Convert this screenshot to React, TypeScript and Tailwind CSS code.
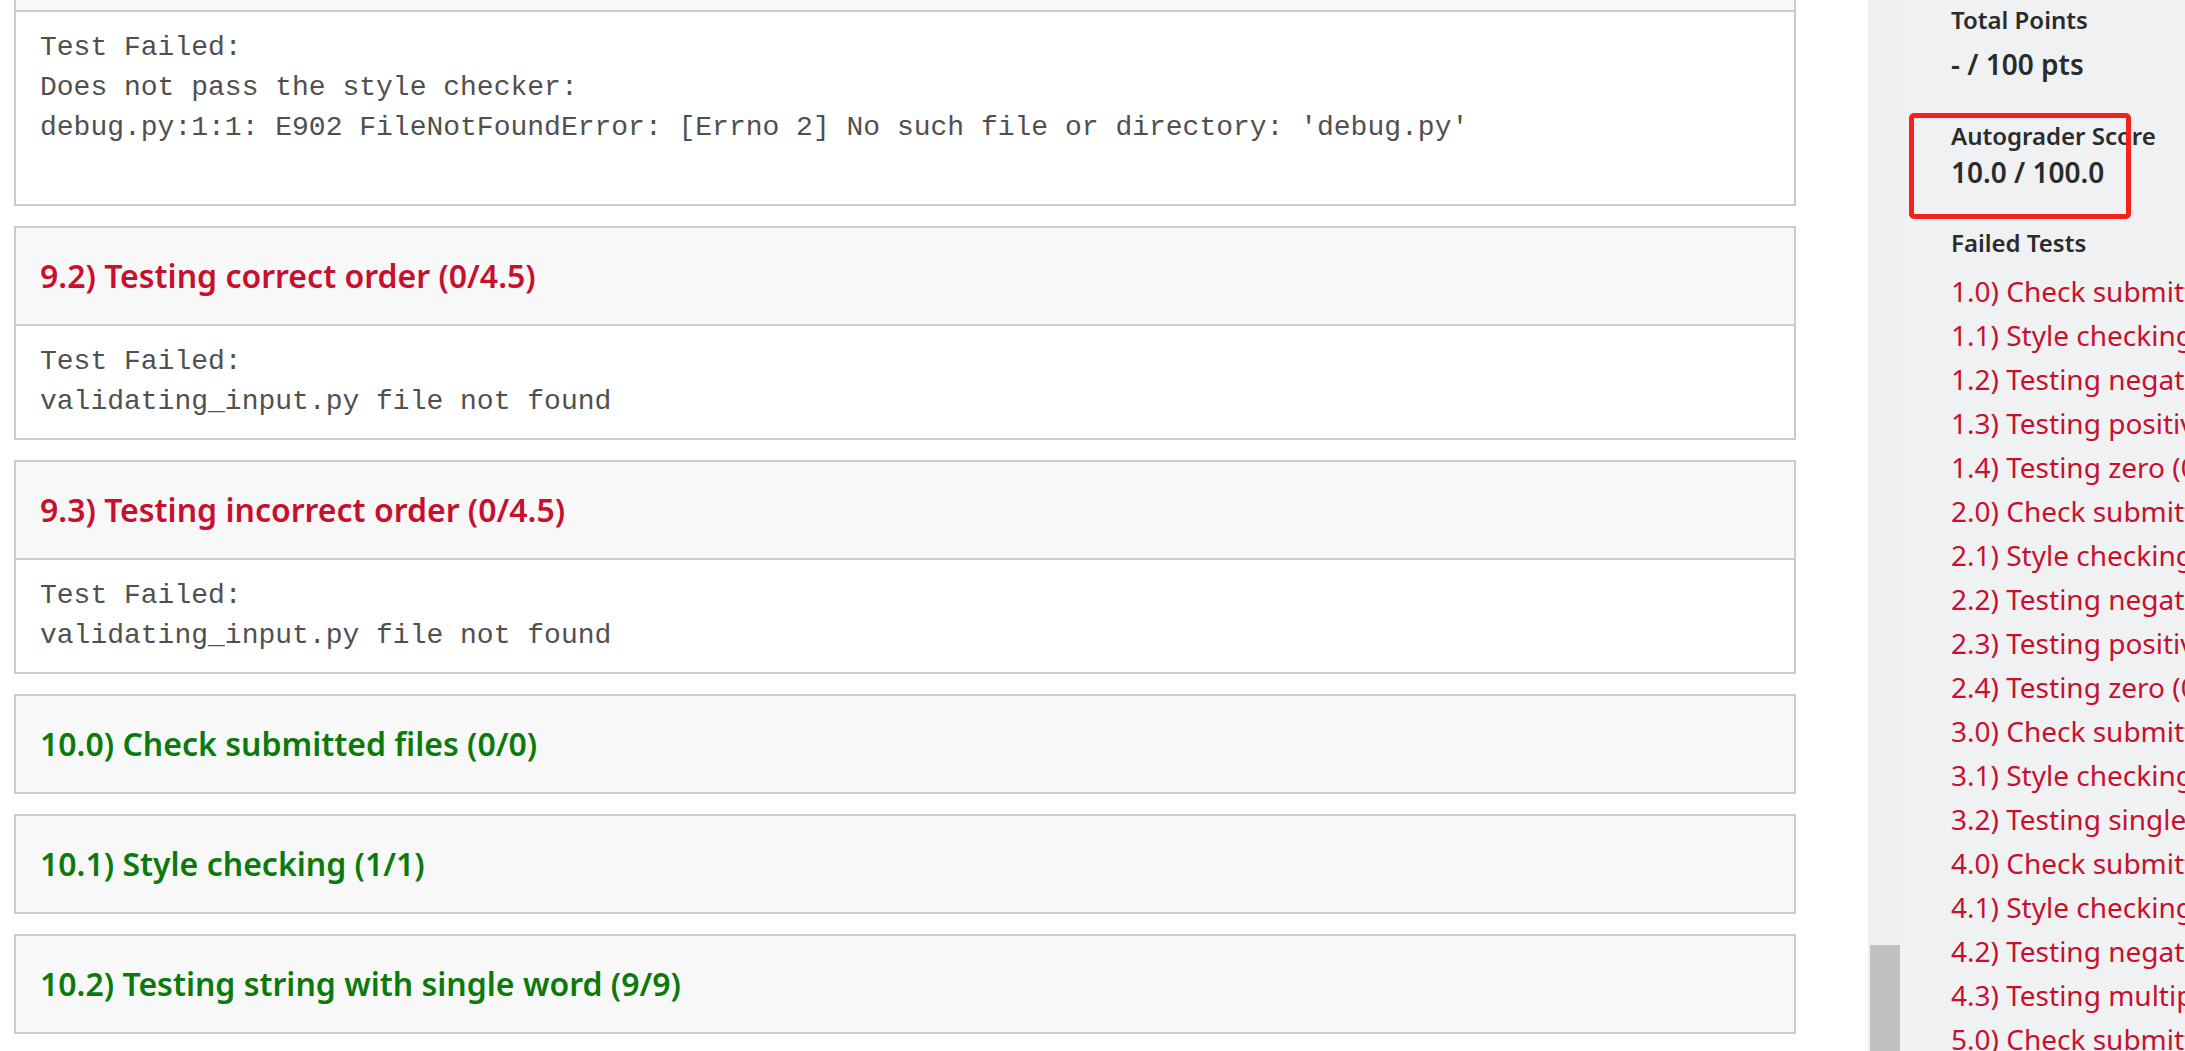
const RESULTS = [
  {
    title: "9.1) Style checking (0/1)",
    passed: false,
    output: [
      "Test Failed:",
      "Does not pass the style checker:",
      "debug.py:1:1: E902 FileNotFoundError: [Errno 2] No such file or directory: 'debug.py'",
      "",
    ],
  },
  {
    title: "9.2) Testing correct order (0/4.5)",
    passed: false,
    output: ["Test Failed:", "validating_input.py file not found"],
  },
  {
    title: "9.3) Testing incorrect order (0/4.5)",
    passed: false,
    output: ["Test Failed:", "validating_input.py file not found"],
  },
  { title: "10.0) Check submitted files (0/0)", passed: true, output: [] },
  { title: "10.1) Style checking (1/1)", passed: true, output: [] },
  { title: "10.2) Testing string with single word (9/9)", passed: true, output: [] },
];

const FAILED_TESTS = [
  "1.0) Check submitted files (0/0)",
  "1.1) Style checking (0/1)",
  "1.2) Testing negative numbers (0/3)",
  "1.3) Testing positive numbers (0/3)",
  "1.4) Testing zero (0/3)",
  "2.0) Check submitted files (0/0)",
  "2.1) Style checking (0/1)",
  "2.2) Testing negative numbers (0/3)",
  "2.3) Testing positive numbers (0/3)",
  "2.4) Testing zero (0/3)",
  "3.0) Check submitted files (0/0)",
  "3.1) Style checking (0/1)",
  "3.2) Testing single word (0/8)",
  "4.0) Check submitted files (0/0)",
  "4.1) Style checking (0/1)",
  "4.2) Testing negative numbers (0/4)",
  "4.3) Testing multiple numbers (0/4)",
  "5.0) Check submitted files (0/0)",
];

function TestCard({ title, passed, output }: { title: string; passed: boolean; output: string[] }) {
  return (
    <div className="border-2 border-[#cccccc] bg-white">
      <div className="h-[96px] flex items-center px-[24px] bg-[#f8f8f8]">
        <h3
          className={`font-['Noto_Sans',sans-serif] text-[32px] font-semibold whitespace-nowrap ${
            passed ? "text-[#0b7a0b]" : "text-[#c8102e]"
          }`}
        >
          {title}
        </h3>
      </div>
      {output.length > 0 && (
        <div className="border-t-2 border-[#cccccc] px-[24px] py-[16px] font-['Liberation_Mono','Courier_New',monospace] text-[28px] leading-[40px] text-[#505050]">
          {output.map((line, i) => (
            <div key={i} className="h-[40px] whitespace-pre">
              {line}
            </div>
          ))}
        </div>
      )}
    </div>
  );
}

export default function App() {
  return (
    <div className="flex h-screen overflow-hidden bg-white">
      {/* results pane, scrolled down to the 9.x / 10.x tests */}
      <main className="w-[1868px] shrink-0 overflow-hidden pl-[14px] pr-[72px]">
        <div className="-mt-[88px] flex flex-col gap-[20px]">
          {RESULTS.map((r) => (
            <TestCard key={r.title} {...r} />
          ))}
        </div>
      </main>

      {/* scrollbar of the results pane */}
      <div className="w-[34px] shrink-0 bg-[#f0f0f0] flex flex-col justify-end px-[2px]">
        <div className="h-[106px] bg-[#c1c1c1]" />
      </div>

      <aside className="relative flex-1 min-w-0 overflow-hidden bg-[#f0f1f3] pl-[49px] pt-[4px] font-['Noto_Sans',sans-serif] text-[#2b2b2b] whitespace-nowrap">
        <div className="text-[24px] leading-[32px] font-semibold">Total Points</div>
        <div className="mt-[8px] text-[28px] leading-[40px] font-semibold">- / 100 pts</div>
        <div className="mt-[36px] text-[24px] leading-[32px] font-semibold">Autograder Score</div>
        <div className="text-[28px] leading-[40px] font-semibold">10.0 / 100.0</div>
        <div className="mt-[35px] text-[24px] leading-[32px] font-semibold">Failed Tests</div>
        <ul className="mt-[10px]">
          {FAILED_TESTS.map((t) => (
            <li key={t} className="text-[28px] leading-[44px] text-[#c8102e]">
              {t}
            </li>
          ))}
        </ul>
        {/* red highlight drawn over the score */}
        <div className="absolute left-[7px] top-[113px] w-[222px] h-[106px] border-[5px] border-[#f5221b] rounded-[5px]" />
      </aside>
    </div>
  );
}
